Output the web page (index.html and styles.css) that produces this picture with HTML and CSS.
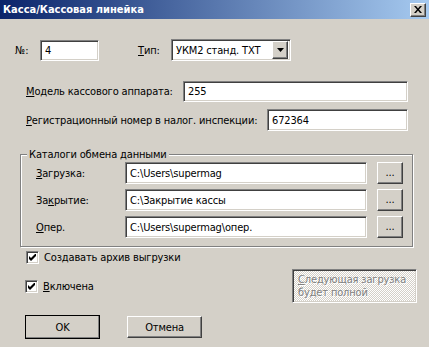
FILE: index.html
```html
<!DOCTYPE html>
<html lang="ru">
<head>
    <meta charset="UTF-8">
    <title>Касса/Кассовая линейка</title>
    <link rel="stylesheet" href="styles.css">
</head>
<body>
    <div class="dialog">
        <div class="titlebar">
            <span class="title">Касса/Кассовая линейка</span>
            <span class="close-btn raised">
                <svg width="8" height="7" viewBox="0 0 8 7"><path d="M0 0h2l2 2.5L6 0h2L5 3.5 8 7H6L4 4.5 2 7H0l3-3.5z" fill="#000"/></svg>
            </span>
        </div>

        <div class="content">
            <div class="row row-top">
                <span class="lbl-num">№:</span>
                <div class="field sunken field-num">4</div>
                <span class="lbl-type"><u>Т</u>ип:</span>
                <div class="combo sunken">
                    <span class="combo-text">УКМ2 станд. TXT</span>
                    <span class="combo-btn raised">
                        <svg width="7" height="4" viewBox="0 0 7 4"><path d="M0 0h7L3.5 4z" fill="#000"/></svg>
                    </span>
                </div>
            </div>

            <div class="row row-model">
                <span class="lbl-model"><u>М</u>одель кассового аппарата:</span>
                <div class="field sunken field-model">255</div>
            </div>

            <div class="row row-reg">
                <span class="lbl-reg"><u>Р</u>егистрационный номер в налог. инспекции:</span>
                <div class="field sunken field-reg">672364</div>
            </div>

            <fieldset class="group">
                <legend>Каталоги обмена данными</legend>
                <div class="path-row">
                    <span class="path-lbl"><u>З</u>агрузка:</span>
                    <div class="field sunken path-field">C:\Users\supermag</div>
                    <span class="btn raised browse">...</span>
                </div>
                <div class="path-row">
                    <span class="path-lbl">За<u>к</u>рытие:</span>
                    <div class="field sunken path-field">C:\Закрытие кассы</div>
                    <span class="btn raised browse">...</span>
                </div>
                <div class="path-row">
                    <span class="path-lbl"><u>О</u>пер.</span>
                    <div class="field sunken path-field">C:\Users\supermag\опер.</div>
                    <span class="btn raised browse">...</span>
                </div>
            </fieldset>

            <div class="check-row check-archive">
                <span class="checkbox sunken">
                    <svg width="7" height="7" viewBox="0 0 7 7"><path d="M0 2l2 2 5-5v3L2 7 0 5z" fill="#000"/></svg>
                </span>
                <span class="check-text">Создавать архив выгрузки</span>
            </div>

            <div class="check-row check-enabled">
                <span class="checkbox sunken">
                    <svg width="7" height="7" viewBox="0 0 7 7"><path d="M0 2l2 2 5-5v3L2 7 0 5z" fill="#000"/></svg>
                </span>
                <span class="check-text"><u>В</u>ключена</span>
                <div class="status sunken"><u>С</u>ледующая загрузка<br>будет полной</div>
            </div>

            <div class="buttons">
                <span class="btn raised btn-ok">OK</span>
                <span class="btn raised btn-cancel">Отмена</span>
            </div>
        </div>
    </div>
</body>
</html>
```

FILE: styles.css
```css
* {
    box-sizing: border-box;
}
body {
    margin: 0;
    padding: 0;
    font-family: "DejaVu Sans Condensed", "Liberation Sans", sans-serif;
    font-size: 11px;
    letter-spacing: -0.15px;
    color: #000;
    background-color: #D4D0C8;
}
.dialog {
    width: 429px;
    height: 347px;
    background-color: #D4D0C8;
    overflow: hidden;
}
.titlebar {
    height: 19px;
    display: flex;
    align-items: center;
    justify-content: space-between;
    padding: 0 3px 0 3px;
    background: linear-gradient(to right, #0A246A, #A6CAF0);
}
.title {
    color: white;
    font-weight: bold;
    font-size: 11px;
    letter-spacing: 0;
}
.close-btn {
    width: 16px;
    height: 14px;
    display: flex;
    align-items: center;
    justify-content: center;
}

/* classic 3d borders */
.sunken {
    background-color: white;
    border-top: 1px solid #808080;
    border-left: 1px solid #808080;
    border-right: 1px solid white;
    border-bottom: 1px solid white;
    box-shadow: inset 1px 1px 0 #404040, inset -1px -1px 0 #D4D0C8;
}
.raised {
    background-color: #D4D0C8;
    border-top: 1px solid white;
    border-left: 1px solid white;
    border-right: 1px solid #404040;
    border-bottom: 1px solid #404040;
    box-shadow: inset -1px -1px 0 #808080;
}

.content {
    padding-top: 20px;
}
.row {
    display: flex;
    align-items: center;
}
.field {
    height: 21px;
    display: flex;
    align-items: center;
    padding-left: 4px;
    white-space: nowrap;
    overflow: hidden;
}
u {
    text-decoration: underline;
    text-underline-offset: 1px;
}

.row-top {
    height: 22px;
}
.lbl-num {
    margin-left: 15px;
    width: 25px;
}
.field-num {
    width: 59px;
}
.lbl-type {
    margin-left: 39px;
    width: 33px;
}
.combo {
    width: 120px;
    height: 22px;
    display: flex;
    align-items: center;
    padding: 2px;
}
.combo-text {
    flex: 1;
    padding-left: 2px;
}
.combo-btn {
    width: 16px;
    height: 18px;
    display: flex;
    align-items: center;
    justify-content: center;
}

.row-model {
    margin-top: 20px;
}
.lbl-model {
    margin-left: 26px;
    width: 157px;
}
.field-model {
    width: 225px;
}
.row-reg {
    margin-top: 7px;
}
.lbl-reg {
    margin-left: 26px;
    width: 241px;
}
.field-reg {
    width: 141px;
    height: 22px;
}

.group {
    margin: 17px 0 0 20px;
    width: 393px;
    padding: 1px 9px 8px 6px;
    border: 1px solid #808080;
    box-shadow: inset 1px 1px 0 white, 1px 1px 0 white;
    min-width: 0;
}
.group legend {
    padding: 0 2px;
    line-height: 13px;
    background-color: #D4D0C8;
}
.path-row {
    display: flex;
    align-items: center;
    margin-left: 9px;
    margin-top: 5px;
}
.path-row:first-of-type {
    margin-top: 0;
}
.path-lbl {
    width: 89px;
}
.path-field {
    width: 242px;
    height: 22px;
}
.btn {
    display: flex;
    align-items: center;
    justify-content: center;
}
.browse {
    margin-left: 10px;
    width: 26px;
    height: 22px;
    padding-bottom: 2px;
}

.check-row {
    display: flex;
    align-items: center;
}
.check-archive {
    margin-top: 3px;
    height: 15px;
    padding-left: 26px;
}
.check-enabled {
    margin-top: 4px;
    padding-left: 25px;
}
.checkbox {
    width: 13px;
    height: 13px;
    display: flex;
    align-items: center;
    justify-content: center;
}
.check-text {
    margin-left: 5px;
}
.status {
    margin-left: auto;
    margin-right: 12px;
    width: 125px;
    height: 34px;
    padding: 3px 0 0 5px;
    line-height: 13px;
    white-space: nowrap;
    color: #808080;
    text-shadow: 1px 1px 0 white;
    background: repeating-conic-gradient(white 0 25%, #D4D0C8 0 50%) 0 0 / 2px 2px;
}

.buttons {
    display: flex;
    align-items: center;
    margin-top: 12px;
    padding-left: 25px;
    height: 24px;
}
.btn-ok {
    width: 75px;
    height: 24px;
    outline: 1px solid black;
    outline-offset: -1px;
    border-right-color: black;
    border-bottom-color: black;
}
.btn-cancel {
    margin-left: 27px;
    width: 75px;
    height: 22px;
}
```
